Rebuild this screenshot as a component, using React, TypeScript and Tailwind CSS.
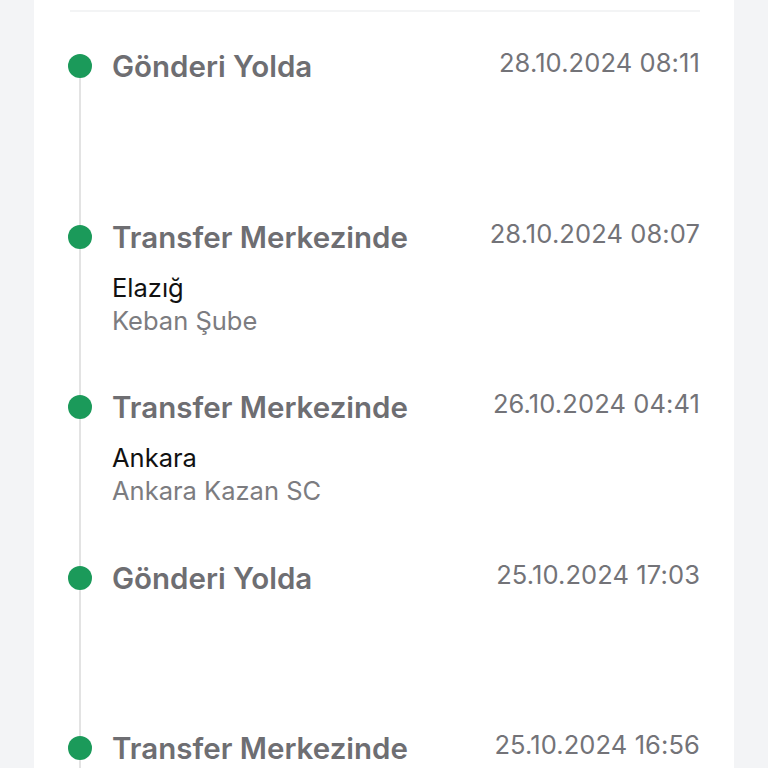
const events = [
  { title: "Gönderi Yolda", date: "28.10.2024 08:11" },
  { title: "Transfer Merkezinde", date: "28.10.2024 08:07", city: "Elazığ", branch: "Keban Şube" },
  { title: "Transfer Merkezinde", date: "26.10.2024 04:41", city: "Ankara", branch: "Ankara Kazan SC" },
  { title: "Gönderi Yolda", date: "25.10.2024 17:03" },
  { title: "Transfer Merkezinde", date: "25.10.2024 16:56" },
];

const App = () => {
  return (
    <main
      className="min-h-[768px] h-[768px] overflow-hidden bg-[#f3f4f6] px-[34px]"
      style={{ fontFamily: "Inter, 'Noto Sans', sans-serif" }}
    >
      <div className="bg-white h-full pt-[10px] pl-[36px] pr-[34px]">
        <div className="h-[2px] bg-[#f3f4f5]" />
        <ul className="mt-[37px]">
          {events.map((e, i) => (
            <li key={i} className="flex h-[170.5px] -ml-[2px]">
              <div className="w-[24px] flex flex-col items-center">
                <div className={i === 0 ? "h-[5px]" : "h-[5px] w-[2px] bg-[#e3e3e3]"} />
                <div className="w-[24px] h-[24px] rounded-full bg-[#1b9a5a] shrink-0" />
                <div className="flex-1 w-[2px] bg-[#e3e3e3]" />
              </div>
              <div className="flex-1 ml-[20px]">
                <div className="flex items-start justify-between">
                  <h3 className="text-[29.5px] leading-[34px] font-semibold text-[#6e6e72]">
                    {e.title}
                  </h3>
                  <span className="text-[25.5px] leading-[28px] text-[#737378] tracking-[0.1px]">{e.date}</span>
                </div>
                {e.city && (
                  <div className="mt-[17px] text-[25.5px] leading-[33px]">
                    <p className="text-[#111111]">{e.city}</p>
                    <p className="text-[#7c7c80]">{e.branch}</p>
                  </div>
                )}
              </div>
            </li>
          ))}
        </ul>
      </div>
    </main>
  );
};

export default App;
